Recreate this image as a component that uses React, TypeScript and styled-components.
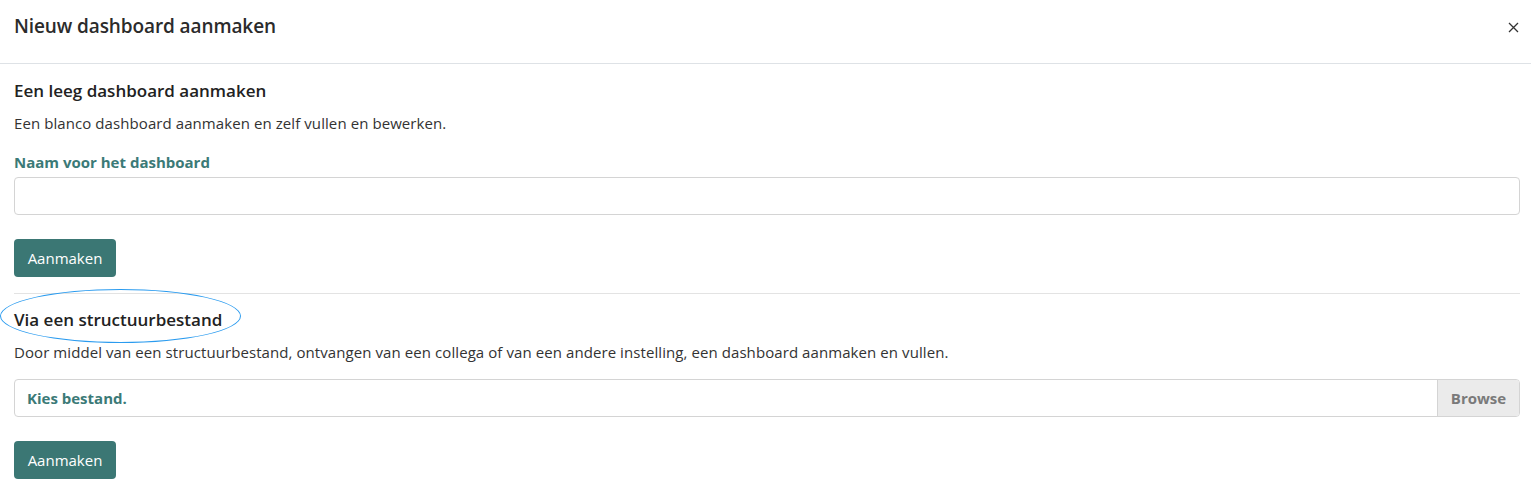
import React from "react";
import styled, { createGlobalStyle } from "styled-components";

const Global = createGlobalStyle`
  html, body { margin: 0; padding: 0; background: #fff; }
  body { font-family: "Open Sans", "Noto Sans", sans-serif; color: #212529; }
  * { box-sizing: border-box; }
`;

const Modal = styled.div`
  width: 1531px;
  background: #fff;
`;

const Header = styled.div`
  height: 64px;
  display: flex;
  align-items: flex-start;
  justify-content: space-between;
  padding: 13px 10px 0 14px;
  border-bottom: 1px solid #dee2e6;
`;

const Title = styled.h1`
  margin: 0;
  font-size: 19px;
  line-height: 27px;
  font-weight: 600;
  color: #2b2b2b;
  letter-spacing: -0.1px;
`;

const Close = styled.button`
  border: 0;
  background: none;
  padding: 0;
  margin-top: 9px;
  margin-right: 2px;
  display: flex;
  color: #333;
  cursor: pointer;
`;

const Body = styled.div`
  padding: 15px 11px 0 14px;
  display: flex;
  flex-direction: column;
`;

const Section = styled.section<{ $top?: number }>`
  position: relative;
  display: flex;
  flex-direction: column;
  padding-top: ${(p) => p.$top ?? 0}px;
`;

const Heading = styled.h2`
  margin: 0;
  font-size: 17px;
  font-weight: 600;
  line-height: 24px;
  color: #222;
`;

const Text = styled.p`
  margin: 10px 0 0;
  font-size: 15px;
  line-height: 20px;
  color: #333;
  letter-spacing: 0.08px;
`;

const Label = styled.label`
  margin-top: 19px;
  font-size: 15px;
  font-weight: 700;
  line-height: 20px;
  color: #3b7a77;
`;

const Input = styled.input`
  margin-top: 5px;
  height: 38px;
  width: 100%;
  border: 1px solid #d4d4d4;
  border-radius: 4px;
  padding: 0 12px;
  font: inherit;
  font-size: 15px;
`;

const FileBox = styled.div`
  margin-top: 17px;
  height: 38px;
  display: flex;
  border: 1px solid #d4d4d4;
  border-radius: 4px;
  overflow: hidden;
`;

const FileName = styled.div`
  flex: 1;
  display: flex;
  align-items: center;
  padding: 0 12px;
  font-size: 15px;
  font-weight: 700;
  color: #3b7a77;
`;

const Browse = styled.div`
  width: 82px;
  display: flex;
  align-items: center;
  justify-content: center;
  background: #ebebeb;
  border-left: 1px solid #d4d4d4;
  font-size: 15px;
  font-weight: 700;
  color: #7a7a7a;
`;

const Button = styled.button`
  margin-top: 24px;
  align-self: flex-start;
  height: 38px;
  width: 102px;
  border: 0;
  border-radius: 4px;
  background: #3b7774;
  color: #fff;
  font: inherit;
  font-size: 15px;
  font-weight: 500;
  cursor: pointer;
`;

const Divider = styled.hr`
  margin: 16px 0 0;
  border: 0;
  border-top: 1px solid #e3e3e3;
  width: 100%;
`;

const Annotation = styled.div`
  position: absolute;
  left: -14px;
  top: -5px;
  width: 241px;
  height: 54px;
  border: 1.5px solid #2a9bef;
  border-radius: 50%;
  pointer-events: none;
`;

export default function App() {
  return (
    <>
      <Global />
      <Modal>
        <Header>
          <Title>Nieuw dashboard aanmaken</Title>
          <Close aria-label="Sluiten">
            <svg width="11" height="11" viewBox="0 0 11 11">
              <path d="M1 1L10 10M10 1L1 10" stroke="#333" strokeWidth="1.3" />
            </svg>
          </Close>
        </Header>
        <Body>
          <Section>
            <Heading>Een leeg dashboard aanmaken</Heading>
            <Text>Een blanco dashboard aanmaken en zelf vullen en bewerken.</Text>
            <Label>Naam voor het dashboard</Label>
            <Input type="text" />
            <Button>Aanmaken</Button>
          </Section>
          <Divider />
          <Section $top={14}>
            <Annotation />
            <Heading>Via een structuurbestand</Heading>
            <Text>
              Door middel van een structuurbestand, ontvangen van een collega of van een andere
              instelling, een dashboard aanmaken en vullen.
            </Text>
            <FileBox>
              <FileName>Kies bestand.</FileName>
              <Browse>Browse</Browse>
            </FileBox>
            <Button>Aanmaken</Button>
          </Section>
        </Body>
      </Modal>
    </>
  );
}
